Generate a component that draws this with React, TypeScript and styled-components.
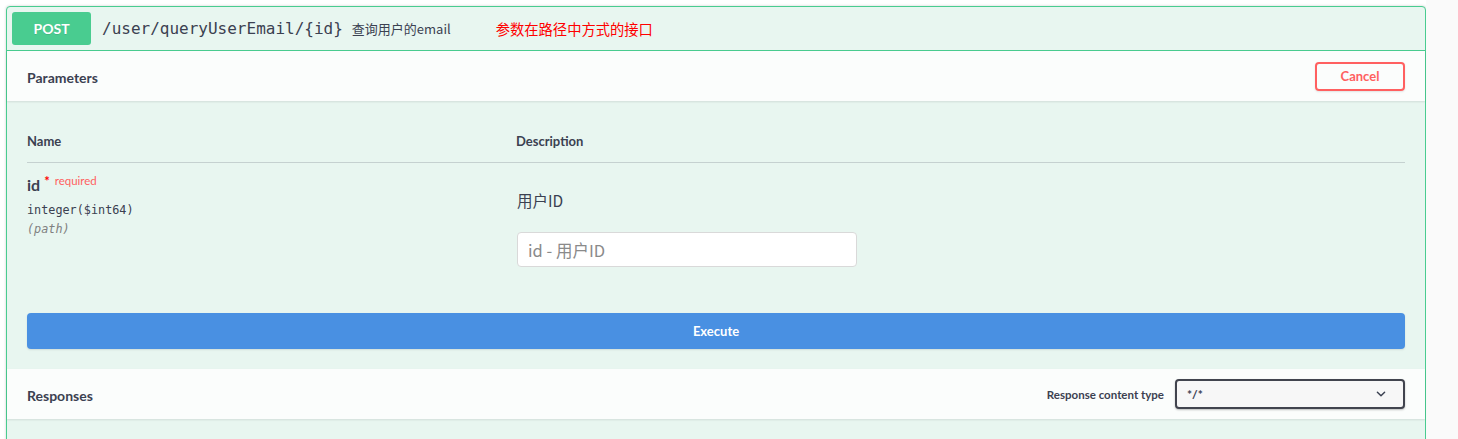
import styled, { createGlobalStyle } from 'styled-components';

const GlobalStyle = createGlobalStyle`
  html, body {
    margin: 0;
    padding: 0;
    background: #ffffff;
  }
  body {
    font-family: Lato, "Noto Sans CJK SC", sans-serif;
    color: #3b4151;
  }
`;

function App() {
  return (
    <Page>
      <GlobalStyle />
      <Main>
        <OpBlock>
          <Summary>
            <MethodBadge>POST</MethodBadge>
            <PathText>/user/queryUserEmail/&#8203;{'{id}'}</PathText>
            <SummaryDesc>查询用户的email</SummaryDesc>
            <SummaryNote>参数在路径中方式的接口</SummaryNote>
          </Summary>

          <SectionHeader>
            <SectionTitle>Parameters</SectionTitle>
            <CancelButton>Cancel</CancelButton>
          </SectionHeader>

          <TableContainer>
            <ParamGrid>
              <HeadCell>Name</HeadCell>
              <HeadCell>Description</HeadCell>
              <NameCell>
                <ParamName>
                  id<Star>*</Star>
                  <Required>required</Required>
                </ParamName>
                <ParamType>integer($int64)</ParamType>
                <ParamIn>(path)</ParamIn>
              </NameCell>
              <DescCell>
                <DescText>用户ID</DescText>
                <TextInput placeholder="id - 用户ID" />
              </DescCell>
            </ParamGrid>
          </TableContainer>

          <ExecuteWrapper>
            <ExecuteButton>Execute</ExecuteButton>
          </ExecuteWrapper>

          <SectionHeader>
            <SectionTitle>Responses</SectionTitle>
            <ContentType>
              <ContentTypeLabel>Response content type</ContentTypeLabel>
              <SelectBox>
                <span>*/*</span>
                <svg width="12" height="12" viewBox="0 0 20 20">
                  <path
                    d="M4 7l6 6 6-6"
                    fill="none"
                    stroke="#3b4151"
                    strokeWidth="2.4"
                    strokeLinecap="round"
                    strokeLinejoin="round"
                  />
                </svg>
              </SelectBox>
            </ContentType>
          </SectionHeader>
          <BottomSpace />
        </OpBlock>
      </Main>
      <Gutter />
    </Page>
  );
}

export default App;

const Page = styled.div`
  display: flex;
  width: 1458px;
  height: 439px;
  overflow: hidden;
`;

const Main = styled.div`
  width: 1426px;
  padding: 6px 0 0 6px;
  box-sizing: border-box;
`;

const Gutter = styled.div`
  flex: 1;
  background: #fafafa;
`;

const OpBlock = styled.div`
  width: 1420px;
  box-sizing: border-box;
  border: 1px solid #49cc90;
  border-radius: 4px;
  background: #e8f6f0;
  box-shadow: 0 0 3px rgba(0, 0, 0, 0.19);
`;

const Summary = styled.div`
  display: flex;
  align-items: center;
  height: 43px;
  padding: 0 5px;
  border-bottom: 1px solid #49cc90;
`;

const MethodBadge = styled.span`
  display: flex;
  align-items: center;
  justify-content: center;
  width: 79px;
  height: 33px;
  border-radius: 3px;
  background: #49cc90;
  color: #ffffff;
  font-size: 14px;
  font-weight: 700;
  text-shadow: 0 1px 0 rgba(0, 0, 0, 0.1);
`;

const PathText = styled.span`
  margin-left: 11px;
  font-family: "DejaVu Sans Mono", monospace;
  font-size: 16px;
  color: #3b4151;
`;

const SummaryDesc = styled.span`
  margin-left: 9px;
  font-size: 13px;
  color: #3b4151;
  font-family: "Noto Sans CJK SC", sans-serif;
`;

const SummaryNote = styled.span`
  margin-left: 45px;
  font-size: 14.3px;
  color: #ff0000;
  font-family: "Noto Sans CJK SC", sans-serif;
`;

const SectionHeader = styled.div`
  display: flex;
  align-items: center;
  justify-content: space-between;
  height: 50px;
  padding: 0 20px;
  background: rgba(255, 255, 255, 0.8);
  box-shadow: 0 1px 2px rgba(0, 0, 0, 0.1);
  position: relative;
`;

const SectionTitle = styled.h4`
  margin: 0;
  padding-top: 2px;
  font-size: 14px;
  font-weight: 700;
  color: #3b4151;
`;

const CancelButton = styled.button`
  width: 90px;
  height: 29px;
  box-sizing: border-box;
  border: 2px solid #ff6060;
  border-radius: 4px;
  background: transparent;
  color: #ff6060;
  font-family: Lato, sans-serif;
  font-size: 13px;
  font-weight: 700;
  box-shadow: 0 1px 2px rgba(0, 0, 0, 0.1);
`;

const TableContainer = styled.div`
  padding: 20px 20px 0;
`;

const ParamGrid = styled.div`
  display: grid;
  grid-template-columns: 489px 1fr;
`;

const HeadCell = styled.div`
  padding: 12px 0;
  height: 17px;
  line-height: 17px;
  font-size: 13px;
  font-weight: 700;
  color: #3b4151;
  border-bottom: 1px solid rgba(59, 65, 81, 0.2);
`;

const NameCell = styled.div`
  padding-top: 11px;
`;

const ParamName = styled.div`
  font-size: 16px;
  font-weight: 700;
  line-height: 22px;
  color: #3b4151;
`;

const Star = styled.span`
  position: relative;
  top: -5px;
  margin-left: 4px;
  font-size: 13px;
  color: #ff0000;
`;

const Required = styled.span`
  position: relative;
  top: -6px;
  margin-left: 5px;
  font-size: 11.5px;
  font-weight: 400;
  color: #ff6060;
`;

const ParamType = styled.div`
  margin-top: 3px;
  font-family: "DejaVu Sans Mono", monospace;
  font-size: 11.8px;
  line-height: 19px;
  color: #3b4151;
`;

const ParamIn = styled.div`
  font-family: "DejaVu Sans Mono", monospace;
  font-size: 11.8px;
  line-height: 19px;
  font-style: italic;
  color: #808080;
`;

const DescCell = styled.div`
  padding: 26px 0 26px 1px;
`;

const DescText = styled.p`
  margin: 0;
  font-family: "Noto Sans CJK SC", sans-serif;
  font-size: 15.5px;
  line-height: 22px;
  color: #3b4151;
`;

const TextInput = styled.input`
  display: block;
  margin-top: 21px;
  width: 340px;
  height: 35px;
  box-sizing: border-box;
  padding: 0 10px;
  border: 1px solid #d9d9d9;
  border-radius: 4px;
  background: #ffffff;
  font-family: "Noto Sans CJK SC", sans-serif;
  font-size: 16.5px;
  &::placeholder {
    color: #8a8a8a;
  }
`;

const ExecuteWrapper = styled.div`
  padding: 20px;
`;

const ExecuteButton = styled.button`
  display: block;
  width: 100%;
  height: 36px;
  border: none;
  border-radius: 4px;
  background: #4990e2;
  color: #ffffff;
  font-family: Lato, sans-serif;
  font-size: 13px;
  font-weight: 700;
  box-shadow: 0 1px 2px rgba(0, 0, 0, 0.1);
`;

const ContentType = styled.div`
  display: flex;
  align-items: center;
  gap: 11px;
`;

const ContentTypeLabel = styled.span`
  font-size: 11.5px;
  font-weight: 700;
  color: #3b4151;
`;

const SelectBox = styled.div`
  display: flex;
  align-items: center;
  justify-content: space-between;
  width: 230px;
  height: 30px;
  box-sizing: border-box;
  padding: 0 16px 0 10px;
  border: 2px solid #41444e;
  border-radius: 4px;
  background: #f7f7f7;
  box-shadow: 0 1px 2px rgba(0, 0, 0, 0.25);
  font-size: 12px;
  font-weight: 700;
  color: #3b4151;
`;

const BottomSpace = styled.div`
  height: 40px;
`;
